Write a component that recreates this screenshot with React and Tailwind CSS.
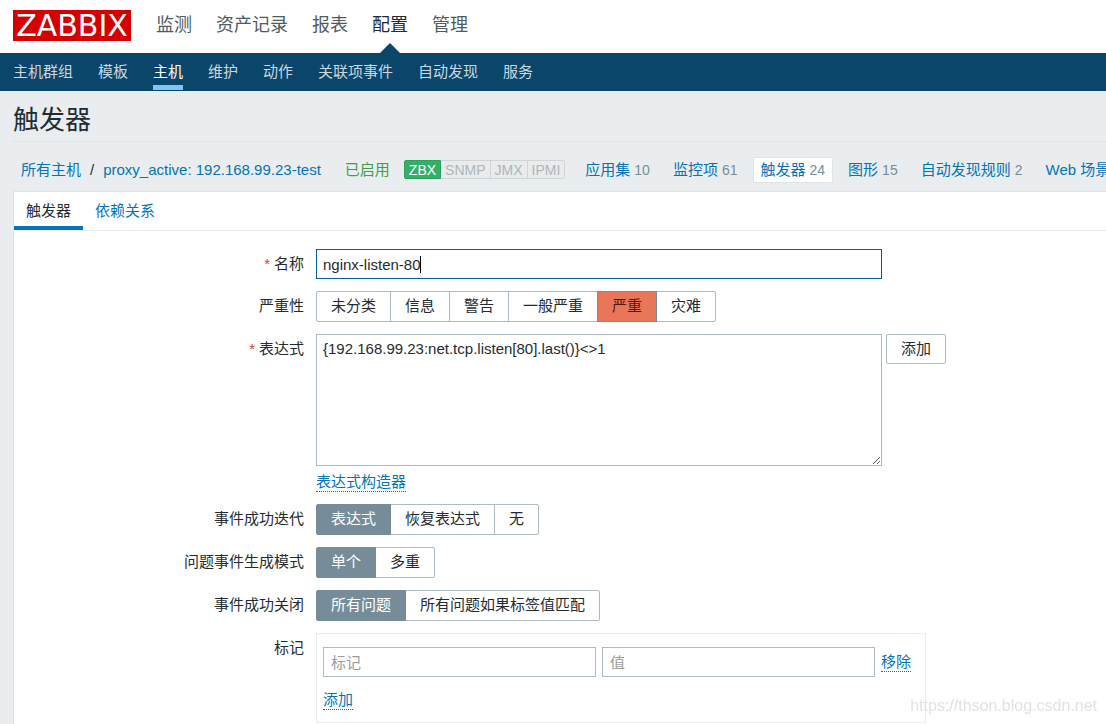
import React, { useState } from "react";
import clsx from "clsx";

const mainMenu = ["监测", "资产记录", "报表", "配置", "管理"];

const subMenu = [
  "主机群组",
  "模板",
  "主机",
  "维护",
  "动作",
  "关联项事件",
  "自动发现",
  "服务",
];

const hostLinks = [
  { name: "应用集", count: 10 },
  { name: "监控项", count: 61 },
  { name: "触发器", count: 24, active: true },
  { name: "图形", count: 15 },
  { name: "自动发现规则", count: 2 },
  { name: "Web 场景" },
];

const severities = ["未分类", "信息", "警告", "一般严重", "严重", "灾难"];

const Header = () => (
  <header>
    <div className="flex h-[53px] items-center bg-white pb-[3px] pl-[13px]">
      <a
        href="#"
        className="flex h-[31px] w-[118px] shrink-0 items-center justify-center bg-[#d40000] font-['DejaVu_Sans',sans-serif] text-[30px] leading-[31px] text-white"
      >
        ZABBIX
      </a>
      <nav className="ml-[25px] flex gap-6 self-stretch whitespace-nowrap text-[18px] leading-6">
        {mainMenu.map((item) => (
          <a
            key={item}
            href="#"
            className={clsx(
              "relative flex items-center",
              item === "配置" ? "text-[#1f2c33]" : "text-[#4f5a61]"
            )}
          >
            {item}
            {item === "配置" && (
              <svg
                viewBox="0 0 20 10"
                className="absolute -bottom-[3px] left-1/2 h-[10px] w-5 -translate-x-1/2"
                aria-hidden="true"
              >
                <path d="M0 10L10 0L20 10Z" fill="#0a466a" />
              </svg>
            )}
          </a>
        ))}
      </nav>
    </div>
    <nav className="flex h-[38px] gap-[25px] whitespace-nowrap bg-[#0a466a] pl-[13px] leading-[22px]">
      {subMenu.map((item) => (
        <a
          key={item}
          href="#"
          className={clsx(
            "mb-px border-b-5 pt-2",
            item === "主机"
              ? "border-[#7fc4f5] text-white"
              : "border-transparent text-[#c9d8e1]"
          )}
        >
          {item}
        </a>
      ))}
    </nav>
  </header>
);

const HostBar = () => (
  <nav className="flex h-[49px] items-center overflow-hidden whitespace-nowrap pl-2 pt-[6px] leading-5 text-[#0275b8]">
    <a href="#">所有主机</a>
    <span className="mx-[9px] text-[#1f2c33]">/</span>
    <a href="#">proxy_active: 192.168.99.23-test</a>
    <span className="ml-6 text-[#429e47]">已启用</span>
    <span className="ml-[14px] mr-3 flex h-[19px] text-[14px] leading-[18px]">
      <span className="rounded-l-xs border border-[#2f9f5e] bg-[#34af67] px-1 text-white">
        ZBX
      </span>
      {["SNMP", "JMX", "IPMI"].map((type) => (
        <span
          key={type}
          className="border border-l-0 border-[#ccd5d9] bg-[#ebebeb] px-1 text-[#aab7bd] last:rounded-r-xs"
        >
          {type}
        </span>
      ))}
    </span>
    {hostLinks.map(({ name, count, active }) => (
      <span
        key={name}
        className={clsx(
          "mr-[7px] rounded-xs border px-[7px] py-[2px]",
          active ? "border-[#dfe4e7] bg-white" : "border-transparent"
        )}
      >
        <a href="#">{name}</a>
        {count && (
          <span className="ml-1 text-[14px] text-[#768d99]">{count}</span>
        )}
      </span>
    ))}
  </nav>
);

const FormRow = ({ label, htmlFor, required, children }) => (
  <div className="flex gap-3">
    <label
      htmlFor={htmlFor}
      className="w-[290px] shrink-0 pt-[3px] text-right leading-6"
    >
      {required && <span className="mr-1 text-[#e33734]">*</span>}
      {label}
    </label>
    <div className="min-w-0">{children}</div>
  </div>
);

const Segmented = ({ name, options, initial, severity }) => {
  const [value, setValue] = useState(initial);

  return (
    <div
      role="radiogroup"
      aria-label={name}
      className="flex whitespace-nowrap leading-7"
    >
      {options.map((option) => (
        <label
          key={option}
          className={clsx(
            "relative -ml-px border px-[14px] pb-px first:ml-0 first:rounded-l-xs last:rounded-r-xs",
            option !== value && "border-[#acbbc2] bg-white",
            option === value &&
              (severity
                ? "z-10 border-[#768d99] bg-[#e97659] text-[#52190b]"
                : "z-10 border-[#768d99] bg-[#768d99] text-white")
          )}
        >
          <input
            type="radio"
            name={name}
            className="sr-only"
            checked={option === value}
            onChange={() => setValue(option)}
          />
          {option}
        </label>
      ))}
    </div>
  );
};

const LinkButton = ({ children }) => (
  <button
    type="button"
    className="block border-b border-dotted border-[#0275b8] leading-[18px] text-[#0275b8]"
  >
    {children}
  </button>
);

const TriggerForm = () => {
  const [name, setName] = useState("nginx-listen-80");
  const [edited, setEdited] = useState(false);
  const [expression, setExpression] = useState(
    "{192.168.99.23:net.tcp.listen[80].last()}<>1"
  );

  return (
    <form className="flex flex-col gap-3 pt-[18px]">
      <FormRow label="名称" htmlFor="name" required>
        <div className="relative">
          <input
            id="name"
            type="text"
            autoFocus
            value={name}
            onChange={(e) => setName(e.target.value)}
            onKeyDown={() => setEdited(true)}
            onPointerDown={() => setEdited(true)}
            onBlur={() => setEdited(true)}
            className={clsx(
              "block h-[30px] w-[566px] max-w-full border border-[#acbbc2] px-[6px] outline-none focus:border-[#005f96]",
              !edited && "caret-transparent"
            )}
          />
          {/* steady caret until the field is touched */}
          {!edited && (
            <span className="pointer-events-none absolute left-[104px] top-[7px] h-[17px] w-px bg-black" />
          )}
        </div>
      </FormRow>
      <FormRow label="严重性">
        <Segmented
          name="严重性"
          options={severities}
          initial="严重"
          severity
        />
      </FormRow>
      <FormRow label="表达式" htmlFor="expression" required>
        <div className="flex items-start gap-1">
          <textarea
            id="expression"
            value={expression}
            onChange={(e) => setExpression(e.target.value)}
            className="block h-[132px] w-[566px] border border-[#acbbc2] px-[6px] py-1 leading-5 outline-none"
          />
          <button
            type="button"
            className="h-[30px] shrink-0 rounded-xs border border-[#acbbc2] px-[14px]"
          >
            添加
          </button>
        </div>
        <div className="mt-[7px]">
          <LinkButton>表达式构造器</LinkButton>
        </div>
      </FormRow>
      <FormRow label="事件成功迭代">
        <Segmented
          name="事件成功迭代"
          options={["表达式", "恢复表达式", "无"]}
          initial="表达式"
        />
      </FormRow>
      <FormRow label="问题事件生成模式">
        <Segmented
          name="问题事件生成模式"
          options={["单个", "多重"]}
          initial="单个"
        />
      </FormRow>
      <FormRow label="事件成功关闭">
        <Segmented
          name="事件成功关闭"
          options={["所有问题", "所有问题如果标签值匹配"]}
          initial="所有问题"
        />
      </FormRow>
      <FormRow label="标记" htmlFor="tag">
        <div className="w-[610px] border border-[#ebeef0] px-[6px] pb-3 pt-[13px]">
          <div className="flex items-center gap-[6px]">
            <input
              id="tag"
              type="text"
              placeholder="标记"
              className="h-[30px] w-[273px] border border-[#acbbc2] px-[7px] outline-none placeholder:text-[#9c9c9c]"
            />
            <input
              type="text"
              aria-label="值"
              placeholder="值"
              className="h-[30px] w-[273px] border border-[#acbbc2] px-[7px] outline-none placeholder:text-[#9c9c9c]"
            />
            <LinkButton>移除</LinkButton>
          </div>
          <div className="mt-[14px]">
            <LinkButton>添加</LinkButton>
          </div>
        </div>
      </FormRow>
    </form>
  );
};

const App = () => {
  return (
    <div className="flex min-h-screen flex-col overflow-x-hidden bg-[#e9edf0] font-['Liberation_Sans','Noto_Sans_CJK_SC',sans-serif] text-[15px] text-[#1f2c33]">
      <Header />
      <main className="flex grow flex-col pl-[13px]">
        <h1 className="border-b border-[#dfe4e7] pb-[3px] pt-[11px] text-[26px] leading-9">
          触发器
        </h1>
        <HostBar />
        <div className="grow border-l border-t border-[#dfe4e7] bg-white">
          <div className="flex border-b border-[#ebeef0] leading-[30px]">
            <a href="#" className="border-b-4 border-[#0275b8] px-3 pt-1">
              触发器
            </a>
            <a href="#" className="px-3 pt-1 text-[#0275b8]">
              依赖关系
            </a>
          </div>
          <TriggerForm />
        </div>
      </main>
      <div className="pointer-events-none fixed bottom-[6px] right-[9px] text-[16px] leading-6 text-[#e2e2e2]">
        https://thson.blog.csdn.net
      </div>
    </div>
  );
};

export default App;
